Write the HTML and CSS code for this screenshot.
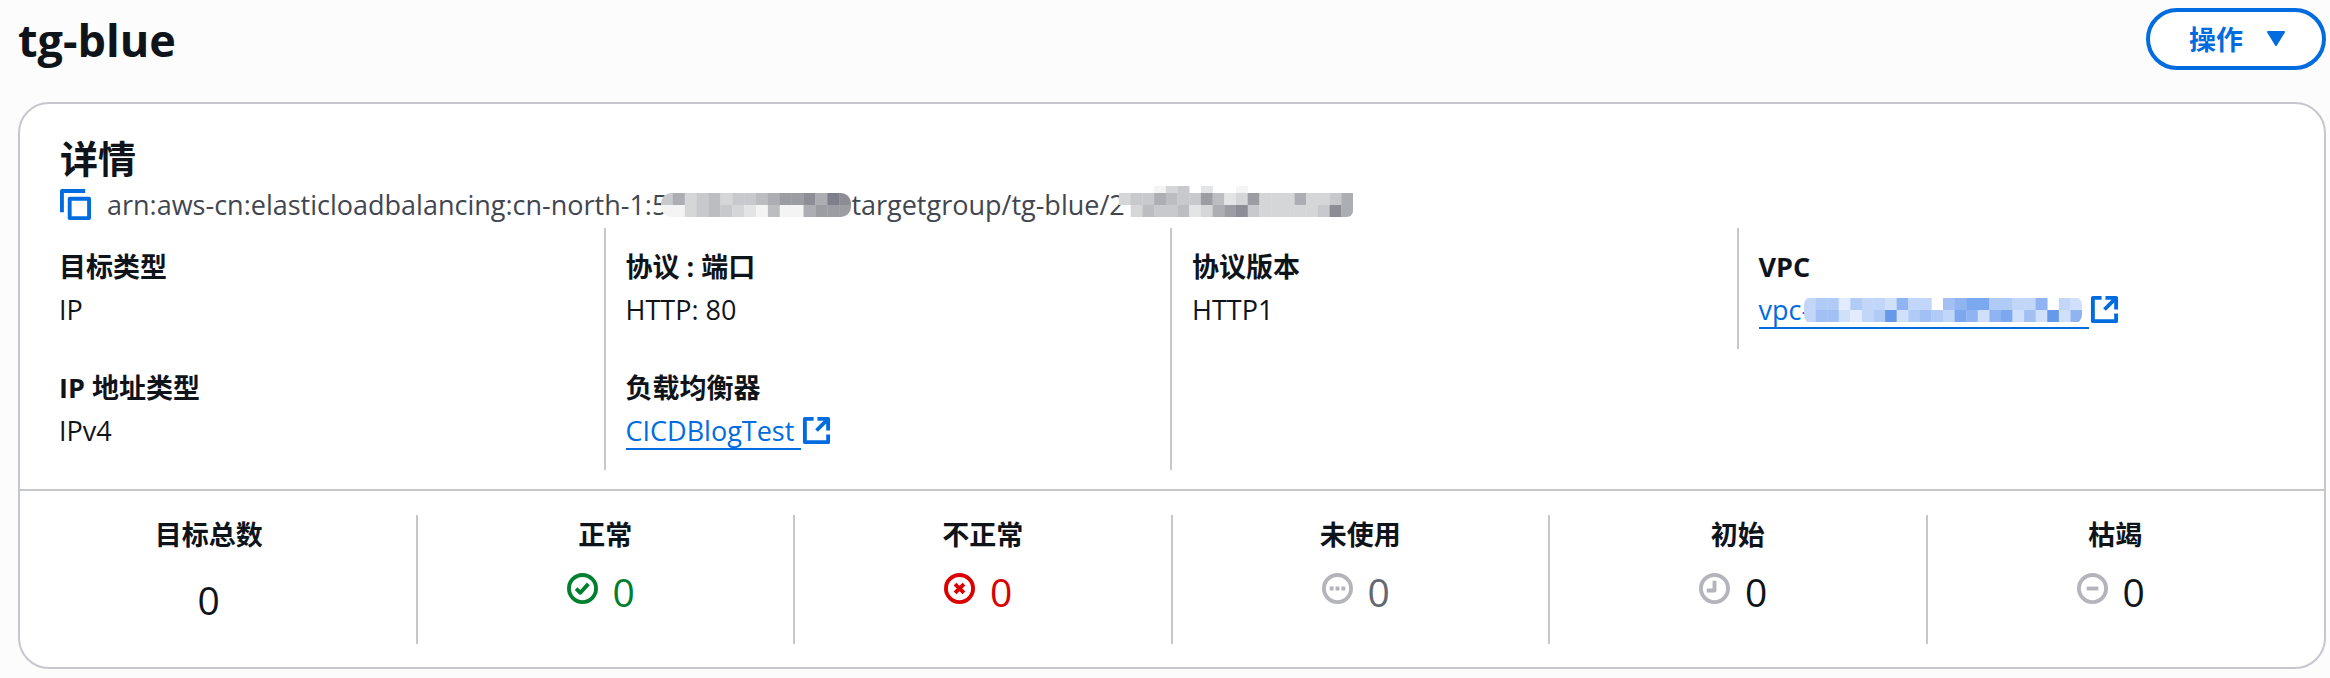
FILE: index.html
```html
<!DOCTYPE html>
<html lang="zh-CN">
<head>
    <meta charset="UTF-8">
    <meta name="viewport" content="width=device-width, initial-scale=1.0">
    <title>tg-blue</title>
    <link rel="stylesheet" href="styles.css">
</head>
<body>
    <header class="page-header">
        <h1>tg-blue</h1>
        <button type="button" class="actions">
            操作
            <svg class="caret" viewBox="0 0 20 20"><path d="M2 3h16L10 16z"/></svg>
        </button>
    </header>

    <main class="card">
        <section class="details">
            <h2>详情</h2>
            <div class="arn">
                <button type="button" class="copy" aria-label="复制">
                    <svg class="icon" viewBox="0 0 16 16"><path d="M1 12V1h12"/><path d="M5 5h10v10H5z"/></svg>
                </button>
                <span>arn:aws-cn:elasticloadbalancing:cn-north-1:5</span>
                <svg class="mask mask-account" viewBox="0 0 190 24"></svg>
                <span>targetgroup/tg-blue/2</span>
                <svg class="mask mask-id" viewBox="0 0 234 38"></svg>
            </div>

            <div class="fields">
                <dl class="field">
                    <dt>目标类型</dt>
                    <dd>IP</dd>
                </dl>
                <dl class="field">
                    <dt>协议 : 端口</dt>
                    <dd>HTTP: 80</dd>
                </dl>
                <dl class="field">
                    <dt>协议版本</dt>
                    <dd>HTTP1</dd>
                </dl>
                <dl class="field">
                    <dt>VPC</dt>
                    <dd>
                        <a href="#vpc"><span class="link-text">vpc-<svg class="mask mask-vpc" viewBox="0 0 278 28"></svg></span><svg class="icon" viewBox="0 0 16 16"><path d="M6.500 2H2v12h12V10"/><path d="M8.500 2H14v6M14 2L8 8"/></svg></a>
                    </dd>
                </dl>
                <dl class="field">
                    <dt>IP 地址类型</dt>
                    <dd>IPv4</dd>
                </dl>
                <dl class="field">
                    <dt>负载均衡器</dt>
                    <dd>
                        <a href="#load-balancer"><span class="link-text">CICDBlogTest</span><svg class="icon" viewBox="0 0 16 16"><path d="M6.500 2H2v12h12V10"/><path d="M8.500 2H14v6M14 2L8 8"/></svg></a>
                    </dd>
                </dl>
                <div class="field"></div>
            </div>
        </section>

        <section class="stats">
            <div class="stat total">
                <h3>目标总数</h3>
                <p class="count">0</p>
            </div>
            <div class="stat healthy">
                <h3>正常</h3>
                <p class="count"><svg class="icon" viewBox="0 0 16 16"><circle cx="8" cy="8" r="7"/><path d="M4.700 8.100l2.200 2.100L11 5.600"/></svg>0</p>
            </div>
            <div class="stat unhealthy">
                <h3>不正常</h3>
                <p class="count"><svg class="icon" viewBox="0 0 16 16"><circle cx="8" cy="8" r="7"/><path d="M5.700 5.700l4.600 4.600M10.300 5.700l-4.600 4.600"/></svg>0</p>
            </div>
            <div class="stat unused">
                <h3>未使用</h3>
                <p class="count"><svg class="icon" viewBox="0 0 16 16"><circle cx="8" cy="8" r="7"/><path d="M4 8h2M7 8h2M10 8h2"/></svg>0</p>
            </div>
            <div class="stat">
                <h3>初始</h3>
                <p class="count"><svg class="icon" viewBox="0 0 16 16"><circle cx="8" cy="8" r="7"/><path d="M8 4v5H4"/></svg>0</p>
            </div>
            <div class="stat">
                <h3>枯竭</h3>
                <p class="count"><svg class="icon" viewBox="0 0 16 16"><circle cx="8" cy="8" r="7"/><path d="M5 8h6"/></svg>0</p>
            </div>
        </section>
    </main>

    <script src="masks.js"></script>
</body>
</html>
```
FILE: styles.css
```css
* {
    box-sizing: border-box;
}
body {
    margin: 0;
    padding: 8px 4px 6px 18px;
    background-color: #fcfcfd;
    color: #0f141a;
    font-family: "Open Sans", "Noto Sans CJK SC", sans-serif;
    font-size: 27px;
    line-height: 39px;
}
h1, h2, h3, p, dl, dd {
    margin: 0;
}
button {
    font: inherit;
    cursor: pointer;
}
.page-header {
    display: flex;
    justify-content: space-between;
    align-items: flex-start;
    height: 94px;
}
h1 {
    font-size: 45px;
    line-height: 63px;
}
h2 {
    font-size: 38px;
    line-height: 46px;
}
h3, dt {
    font-size: 27px;
    font-weight: 700;
    line-height: 39px;
}
.actions {
    display: flex;
    align-items: center;
    gap: 23px;
    height: 62px;
    padding: 0 36px 0 39px;
    border: 4px solid #006ce0;
    border-radius: 31px;
    background-color: #fff;
    color: #006ce0;
    font-weight: 700;
}
.caret {
    width: 20px;
    height: 20px;
    fill: #006ce0;
    stroke: #006ce0;
    stroke-width: 2;
    stroke-linejoin: round;
}
.icon {
    flex: none;
    width: 31px;
    height: 31px;
    fill: none;
    stroke: currentColor;
    stroke-width: 2;
    stroke-linejoin: round;
}
.card {
    border: 2px solid #c6c6cd;
    border-radius: 31px;
    background-color: #fff;
}
.details {
    padding: 31px 21px 19px 17px;
    border-bottom: 2px solid #c6c6cd;
}
.details h2,
.arn {
    padding-left: 23px;
}
.arn {
    display: flex;
    align-items: center;
    height: 47px;
    color: #424650;
}
.copy {
    display: flex;
    margin-right: 16px;
    padding: 0;
    border: 0;
    background: none;
    color: #006ce0;
}
.mask {
    flex: none;
    margin-left: -6px;
}
.mask-account {
    width: 190px;
    height: 24px;
}
.mask-id {
    width: 234px;
    height: 38px;
}
.mask-vpc {
    width: 278px;
    height: 28px;
    vertical-align: -4px;
}
.fields {
    display: grid;
    grid-template-columns: repeat(4, 1fr);
}
.field {
    padding: 19px 20px 20px;
    border-left: 2px solid #c6c6cd;
}
.field:nth-child(4n + 1) {
    border-left-color: transparent;
}
.field dd {
    margin-top: 4px;
}
a {
    display: flex;
    align-items: center;
    height: 39px;
    color: #006ce0;
    text-decoration: none;
}
.link-text {
    height: 39px;
    padding-right: 7px;
    border-bottom: 2px solid #006ce0;
}
.stats {
    display: grid;
    grid-template-columns: repeat(6, 1fr);
    padding: 24px 21px 23px 18px;
    text-align: center;
}
.stat {
    height: 129px;
    border-left: 2px solid #c6c6cd;
}
.total {
    padding-right: 38px;
    border-left-color: transparent;
}
.count {
    display: flex;
    justify-content: center;
    gap: 15px;
    padding: 10px 9px 0 0;
    font-size: 39px;
    font-weight: 500;
    line-height: 56px;
}
.total .count {
    padding: 18px 0 0;
}
.count .icon {
    margin-top: 9px;
    color: #b4b4bb;
}
.healthy .count,
.healthy .icon {
    color: #00802f;
}
.unhealthy .count,
.unhealthy .icon {
    color: #db0000;
}
.unused .count {
    color: #656871;
}
```
FILE: masks.js
```js
// pixel blocks that hide the account number and ids, one digit per block (0 = empty)
const grey = ['', '#f4f4f5', '#e3e4e6', '#d5d6d8', '#c8c9cc', '#bcbdc1', '#adaeb3', '#9c9da3', '#8c8d95', '#7d808a'];
const blue = ['', '#f1f5fe', '#e3ecfc', '#d0e0fa', '#c1d6f8', '#b0cbf6', '#a2c0f4', '#90b4f2', '#7ba8ee', '#6699ea'];

function drawMask(selector, colors, rows, offset, height, radius) {
    const svg = document.querySelector(selector);
    const size = svg.viewBox.baseVal;
    const ns = 'http://www.w3.org/2000/svg';
    const clip = document.createElementNS(ns, 'clipPath');
    const shape = document.createElementNS(ns, 'rect');
    clip.id = selector.slice(1) + '-clip';
    shape.setAttribute('width', size.width);
    shape.setAttribute('height', height);
    shape.setAttribute('rx', radius);
    clip.appendChild(shape);
    svg.appendChild(clip);

    const group = document.createElementNS(ns, 'g');
    group.setAttribute('clip-path', 'url(#' + clip.id + ')');
    const width = size.width / rows[0].length;
    rows.forEach((row, y) => {
        [...row].forEach((level, x) => {
            if (level === '0') return;
            const rect = document.createElementNS(ns, 'rect');
            rect.setAttribute('x', x * width);
            rect.setAttribute('y', offset + y * 12);
            rect.setAttribute('width', width + 0.3);
            rect.setAttribute('height', 12);
            rect.setAttribute('fill', colors[level]);
            group.appendChild(rect);
        });
    });
    svg.appendChild(group);
}

drawMask('.mask-account', grey, ['4634534456778698', '1134543215116777'], 0, 24, 10);
drawMask('.mask-id', grey, ['00013402001000000000', '34465447523733363346', '03544523678433333486'], -5, 31, 6);
drawMask('.mask-vpc', blue, ['455254437440678855447043', '466324593565487378363937'], 2, 28, 9);
```
